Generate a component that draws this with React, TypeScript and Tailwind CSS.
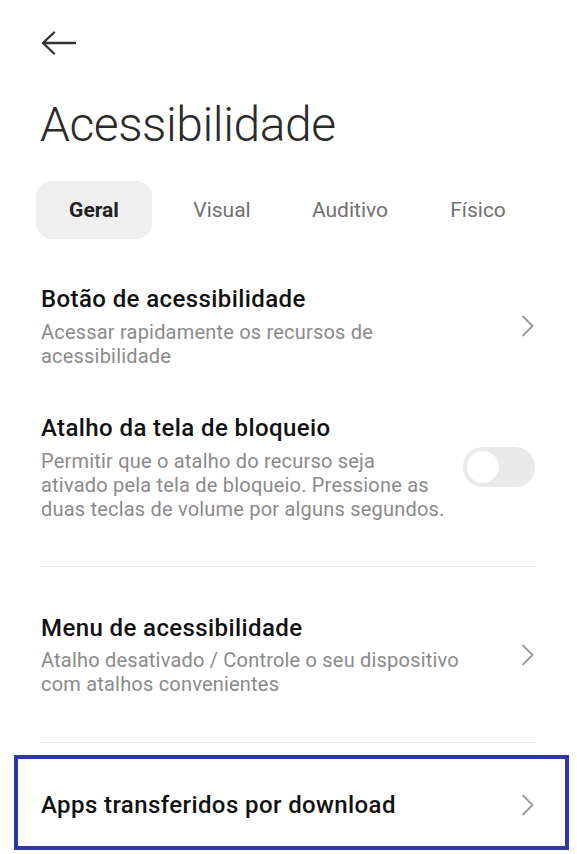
import React from 'react';

function Chevron() {
  return (
    <svg width="14" height="22" viewBox="0 0 14 22" fill="none" className="shrink-0">
      <path d="M2 1.5 L11.5 11 L2 20.5" stroke="#9a9a9a" strokeWidth="1.8" strokeLinecap="round" strokeLinejoin="round" />
    </svg>
  );
}

function Toggle() {
  return (
    <div className="w-[72px] h-[40px] rounded-full bg-[#e9e9e9] flex items-center px-[4px] shrink-0">
      <div className="w-[32px] h-[32px] rounded-full bg-white" />
    </div>
  );
}

export default function App() {
  const tabs = ['Geral', 'Visual', 'Auditivo', 'Físico'];

  return (
    <div className="w-[577px] h-[854px] bg-white overflow-hidden font-['Roboto',sans-serif]">
      {/* back */}
      <div className="pt-[31px] pl-[41px] h-[101px]">
        <svg width="36" height="26" viewBox="0 0 36 26" fill="none">
          <path d="M2 12 H34 M13 1.5 L2 12 L13 22.5" stroke="#333" strokeWidth="2.4" strokeLinecap="round" strokeLinejoin="round" />
        </svg>
      </div>

      <h1 className="pl-[40px] text-[48px] leading-[48px] font-light text-[#2b2b2b] tracking-[-0.45px]">
        Acessibilidade
      </h1>

      {/* tabs */}
      <div className="mt-[32px] pl-[30px] flex">
        {tabs.map((t, i) => (
          <div key={t} className="w-[128px] flex justify-center">
            <div
              className={
                i === 0
                  ? 'w-[116px] h-[58px] pt-[2px] rounded-[16px] bg-[#efefef] flex items-center justify-center text-[21px] font-bold text-[#222]'
                  : 'w-[116px] h-[58px] pt-[2px] flex items-center justify-center text-[21px] text-[#707070]'
              }
            >
              {t}
            </div>
          </div>
        ))}
      </div>

      <div className="pl-[41px] pr-[42px]">
        {/* item 1 */}
        <div className="mt-[45px] flex items-center gap-[12px]">
          <div className="flex-1">
            <div className="text-[24px] leading-[30px] font-medium text-[#111] tracking-[0.4px]">Botão de acessibilidade</div>
            <div className="mt-[6px] text-[20px] leading-[24px] text-[#8a8a8a] tracking-[0.2px] pr-[60px]">
              Acessar rapidamente os recursos de acessibilidade
            </div>
          </div>
          <Chevron />
        </div>

        {/* item 2 */}
        <div className="mt-[45px] flex items-center gap-[10px]">
          <div className="flex-1">
            <div className="text-[24px] leading-[30px] font-medium text-[#111] tracking-[0.4px]">Atalho da tela de bloqueio</div>
            <div className="mt-[6px] text-[20px] leading-[24px] text-[#8a8a8a] tracking-[0.2px]">
              Permitir que o atalho do recurso seja
              <br />
              ativado pela tela de bloqueio. Pressione as
              <br />
              duas teclas de volume por alguns segundos.
            </div>
          </div>
          <Toggle />
        </div>

        <div className="mt-[45px] h-px bg-[#ececec]" />

        {/* item 3 */}
        <div className="mt-[46px] flex items-center gap-[12px]">
          <div className="flex-1">
            <div className="text-[24px] leading-[30px] font-medium text-[#111] tracking-[0.4px]">Menu de acessibilidade</div>
            <div className="mt-[5px] text-[20px] leading-[24px] text-[#8a8a8a] tracking-[0.2px] pr-[30px]">
              Atalho desativado / Controle o seu dispositivo com atalhos convenientes
            </div>
          </div>
          <Chevron />
        </div>

        <div className="mt-[46px] h-px bg-[#ececec]" />
      </div>

      {/* highlighted item */}
      <div className="mt-[12px] ml-[14px] mr-[8px] h-[95px] border-[4px] border-[#2e37a4] pt-[4px] pl-[23px] pr-[30px] flex items-center justify-between">
        <div className="text-[24px] leading-[30px] font-medium text-[#111] tracking-[0.4px]">Apps transferidos por download</div>
        <Chevron />
      </div>
    </div>
  );
}
